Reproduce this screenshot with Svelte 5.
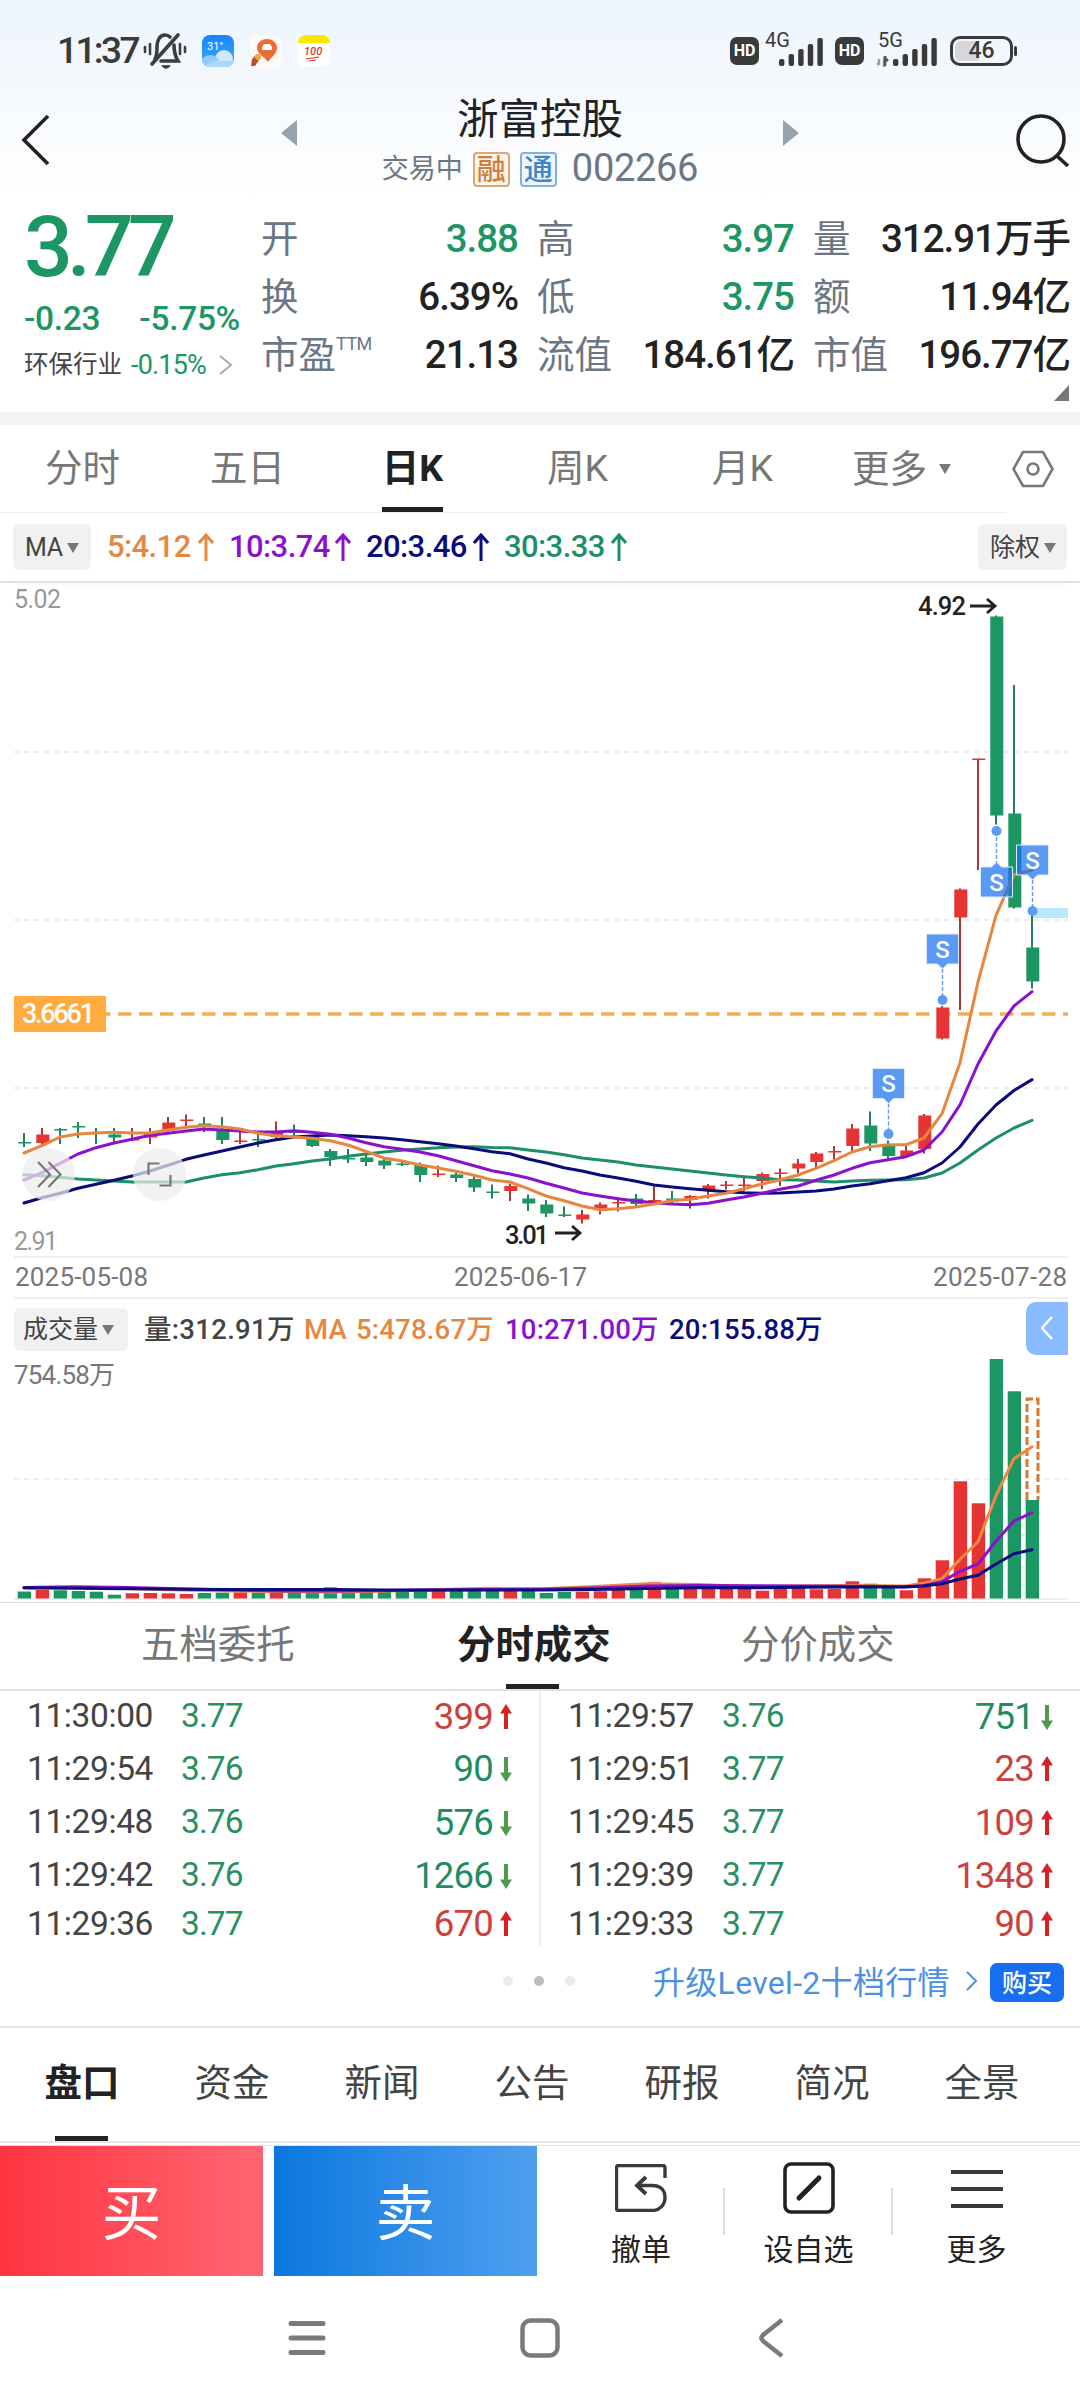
<script lang="ts">
  const up = '#e63333';
  const down = '#1c9663';

  const quotes = [
    { label: '开', value: '3.88', green: true },
    { label: '高', value: '3.97', green: true },
    { label: '量', value: '312.91万手' },
    { label: '换', value: '6.39%' },
    { label: '低', value: '3.75', green: true },
    { label: '额', value: '11.94亿' },
    { label: '市盈', sup: 'TTM', value: '21.13' },
    { label: '流值', value: '184.61亿' },
    { label: '市值', value: '196.77亿' }
  ];

  const periods = ['分时', '五日', '日K', '周K', '月K'];

  const averages = [
    { text: '5:4.12', color: '#e5873f', width: 122 },
    { text: '10:3.74', color: '#8a12cf', width: 137 },
    { text: '20:3.46', color: '#0b0b7c', width: 138 },
    { text: '30:3.33', color: '#1c8f6a', width: 138 }
  ];

  // [high, body top, body bottom, low, rising]
  const candles: [number, number, number, number, number][] = [
    [1133, 1142, 1143.5, 1147, 0],
    [1128, 1134.5, 1143, 1147, 1],
    [1128, 1129, 1130.5, 1144, 0],
    [1122, 1126, 1127.5, 1138, 0],
    [1128, 1132.5, 1134, 1144, 0],
    [1128, 1134.5, 1137.5, 1142, 0],
    [1128, 1139, 1140.5, 1141, 1],
    [1128, 1134, 1137.5, 1144, 1],
    [1117, 1122.5, 1130.5, 1132, 1],
    [1114.5, 1119.5, 1121, 1126, 1],
    [1117, 1123.5, 1126, 1132, 0],
    [1117, 1130.5, 1140, 1144, 0],
    [1128, 1140.5, 1142, 1144, 1],
    [1131, 1139, 1140.5, 1147, 0],
    [1121.5, 1132, 1137, 1139, 1],
    [1124.5, 1132, 1133, 1137, 0],
    [1135, 1137, 1146, 1147, 0],
    [1149, 1151, 1157, 1166, 0],
    [1149, 1158, 1159.5, 1163, 0],
    [1155, 1157.5, 1162, 1166, 0],
    [1159, 1160.5, 1165.5, 1169, 0],
    [1160, 1163.5, 1165, 1166, 0],
    [1162.5, 1165, 1175, 1182, 0],
    [1165.5, 1173.5, 1175, 1177, 1],
    [1172.5, 1174.5, 1178, 1182, 0],
    [1176.5, 1179, 1187.5, 1192, 0],
    [1184.5, 1191.5, 1193, 1198.5, 0],
    [1184, 1186, 1191, 1201, 1],
    [1194.5, 1198.5, 1203.5, 1211, 0],
    [1200, 1204.5, 1213.5, 1217, 0],
    [1206.5, 1214.5, 1216, 1217, 0],
    [1210, 1214.5, 1219.5, 1223.5, 1],
    [1202.5, 1204.5, 1209.5, 1214.5, 1],
    [1198, 1202, 1203.5, 1211.5, 1],
    [1194, 1198.5, 1204, 1208, 0],
    [1186, 1200, 1201.5, 1204.5, 1],
    [1191, 1198.5, 1200, 1203.5, 0],
    [1195, 1196, 1200, 1208.5, 1],
    [1184, 1185.5, 1191, 1198.5, 1],
    [1181, 1184.5, 1186, 1189.5, 1],
    [1176.5, 1184.5, 1186, 1191.5, 1],
    [1172.5, 1174, 1181, 1189, 1],
    [1168.5, 1172.5, 1174, 1186, 1],
    [1159, 1163.5, 1168.5, 1173.5, 1],
    [1152, 1153.5, 1162, 1168.5, 1],
    [1146, 1151, 1152.5, 1159, 1],
    [1124, 1128.5, 1146, 1151.5, 1],
    [1111.5, 1125.5, 1143.5, 1151, 0],
    [1140.5, 1146, 1156, 1158.5, 0],
    [1146, 1150.5, 1156, 1157.5, 1],
    [1114, 1115.5, 1149, 1153.5, 1],
    [1006, 1007.5, 1038.5, 1039.5, 1],
    [888.5, 889.5, 917.5, 1010, 1],
    [758.5, 758.5, 760, 870, 1],
    [615.5, 616.5, 815.5, 824.5, 0],
    [685, 813.5, 907.5, 908.5, 0],
    [914.5, 947.5, 981.5, 988.5, 0]
  ];

  const priceLines = [
    {
      color: '#1c8f6a',
      ys: [
        1174.7, 1175.7, 1177.3, 1179, 1180, 1181, 1182, 1182, 1182, 1182, 1178, 1174.7, 1172.7, 1169.7, 1166,
        1163.7, 1161, 1159, 1156.3, 1154, 1152, 1150.3, 1149, 1147.7, 1147, 1146.7, 1147.5, 1147.7, 1150,
        1152, 1154.7, 1158, 1160, 1162, 1165, 1167, 1169, 1171, 1173, 1175, 1176.7, 1178, 1179.7, 1179.9,
        1181, 1182, 1181, 1180.3, 1180, 1179.7, 1178, 1173, 1163, 1150, 1138, 1128, 1120.4
      ]
    },
    {
      color: '#0b0b7c',
      ys: [
        1203, 1197.7, 1193.3, 1188.3, 1184.3, 1180.3, 1176, 1171, 1165.3, 1159.3, 1155, 1151, 1147, 1143,
        1139.7, 1137, 1136, 1135, 1135.7, 1136.7, 1138, 1139.7, 1141.7, 1143.7, 1146, 1148.7, 1151.7,
        1153.7, 1159, 1163, 1167.7, 1171, 1175, 1178, 1181.3, 1185, 1187, 1188.7, 1190.3, 1191.7, 1192.7,
        1193.3, 1193, 1192, 1191, 1189, 1186, 1183.7, 1180.7, 1177.7, 1172.7, 1163, 1147, 1124, 1105,
        1090.5, 1079.6
      ]
    },
    {
      color: '#8a12cf',
      ys: [
        1180, 1172.7, 1163.3, 1154, 1147.7, 1143, 1139.3, 1135.3, 1133.3, 1131, 1129, 1130, 1131, 1132, 1132,
        1130.7, 1132.3, 1134.3, 1138, 1142.7, 1146.7, 1149.3, 1152, 1155.7, 1160.7, 1165.7, 1170.7, 1174,
        1178, 1183.3, 1188, 1193, 1196, 1198.7, 1201, 1202.7, 1204, 1204.7, 1203.3, 1200, 1197, 1193.3,
        1189.3, 1186, 1180.3, 1175, 1168.3, 1162.7, 1159.7, 1156.7, 1150, 1132, 1104.8, 1064, 1031, 1006,
        991.6
      ]
    },
    {
      color: '#e5873f',
      ys: [
        1153, 1145.7, 1137, 1134, 1133, 1132.3, 1133, 1133, 1130, 1127.3, 1125.7, 1126.7, 1129, 1133.3,
        1135.7, 1137, 1138.3, 1140.7, 1145, 1151.3, 1158, 1161, 1165, 1168, 1171.3, 1175.3, 1180, 1182,
        1188.7, 1196, 1200.7, 1206, 1209.7, 1208.7, 1207, 1204, 1200.7, 1199.3, 1196, 1193.3, 1188.7, 1184,
        1179.7, 1175, 1168.3, 1160.7, 1152, 1146.7, 1144.7, 1144.7, 1138, 1113.7, 1062.7, 982, 915.4,
        874.6, 870.4
      ]
    }
  ];

  const flags = [
    { x: 888.5, box: 1068.5, dot: 1134, below: false },
    { x: 942.5, box: 934, dot: 1000, below: false },
    { x: 996.5, box: 867, dot: 831, below: true },
    { x: 1032.5, box: 845, dot: 911, below: false }
  ];

  // tops of the volume bars
  const volumes = [
    1591.5, 1590, 1590.3, 1591, 1591.7, 1594.7, 1593.3, 1593, 1593.3, 1594, 1593, 1592.7, 1592.3, 1592.7, 1592,
    1592.7, 1590.7, 1587.3, 1591.3, 1592, 1591.7, 1591, 1591, 1591, 1590.5, 1590, 1589, 1590, 1591, 1593, 1592,
    1591.7, 1591.3, 1586.3, 1583.3, 1582.3, 1589, 1585, 1586, 1585.3, 1585.7, 1590.7, 1589, 1587.7, 1589.3,
    1589, 1581.3, 1583.7, 1585, 1590.3, 1578.3, 1560.3, 1481.3, 1503.3, 1359, 1391.3, 1500
  ];

  const volumeLines = [
    { color: '#f08a42', start: [1588.3, 1587.5, 1588.5, 1590, 1591, 1591.5, 1592, 1591, 1589.5, 1588.3, 1588.8, 1586.5, 1583.8, 1584.5, 1586.5, 1586, 1585.5, 1586], tail: [1583.3, 1578.7, 1559.3, 1541.7, 1495.7, 1458.7, 1446.7] },
    { color: '#8a12cf', start: [1587.5, 1586.8, 1587.5, 1588.8, 1590, 1591, 1591, 1590.5, 1590, 1589.5, 1589.3, 1588, 1586, 1585.5, 1585.8, 1586, 1586.3, 1586.8], tail: [1585.5, 1581.7, 1571.3, 1564, 1541.3, 1521, 1512.7] },
    { color: '#0b0b7c', start: [1587.8, 1588.2, 1588.7, 1589.3, 1589.5, 1589.5, 1589.5, 1590, 1590, 1590, 1590, 1589.5, 1588.5, 1587.8, 1587.8, 1587.3, 1587, 1587], tail: [1586, 1583.7, 1579, 1575.3, 1564, 1553.7, 1549.7] }
  ];

  const trades = [
    [['11:30:00', '3.77', '399', 'up'], ['11:29:57', '3.76', '751', 'down']],
    [['11:29:54', '3.76', '90', 'down'], ['11:29:51', '3.77', '23', 'up']],
    [['11:29:48', '3.76', '576', 'down'], ['11:29:45', '3.77', '109', 'up']],
    [['11:29:42', '3.76', '1266', 'down'], ['11:29:39', '3.77', '1348', 'up']],
    [['11:29:36', '3.77', '670', 'up'], ['11:29:33', '3.77', '90', 'up']]
  ];

  const sections = ['盘口', '资金', '新闻', '公告', '研报', '简况', '全景'];

  const cx = (i: number) => 24 + i * 18;
  const points = (ys: number[]) => ys.map((y, i) => `${cx(i)},${y}`).join(' ');

  // the quiet weeks are sampled about every three bars, the last seven days one by one
  function volumePoints(line: { start: number[]; tail: number[] }) {
    const a = line.start.map((y, i) => `${cx(i * 2.88)},${y}`);
    const b = line.tail.map((y, i) => `${cx(50 + i)},${y}`);
    return [...a, ...b].join(' ');
  }
</script>

{#snippet caret()}
  <svg class="caret" viewBox="0 0 12 10" width="12" height="10"><path d="M0 0h12L6 10z" fill="currentColor" /></svg>
{/snippet}

{#snippet signal(full: boolean)}
  <svg class="signal" viewBox="0 0 60 32" width="60" height="32">
    {#if full}
      <path d="M2 24v6m0 0l-2-2M7 24v8" stroke="#999" stroke-width="2.4" />
      <path d="M8 21v10M7 22l4 4" stroke="#555" stroke-width="2.6" />
    {/if}
    {#each [7, 12, 17, 22, 28] as h, i}
      <rect x={16 + i * 9.6} y={31 - h} width="5.4" height={h} rx="2" fill="#3a3a3a" />
    {/each}
  </svg>
{/snippet}

<div class="screen">
  <div class="status">
    <span class="clock">11:37</span>
    <svg class="mute" viewBox="0 0 44 38" width="44" height="38" fill="none" stroke="#3d3d3d" stroke-width="3.6" stroke-linecap="round">
      <path d="M12 27c2-3 2-6 2-12C14 8 17 3 22 3c2 0 4 1 5 2M31 13c0 6 1 11 4 16H18" />
      <path d="M35 3L9 32" />
      <path d="M7 12v10M2 15v5M37 12v10M42 15v5" stroke-width="2.6" />
      <path d="M19 34c2 3 6 3 8 0z" fill="#3d3d3d" stroke-width="1" />
    </svg>
    <svg class="app" viewBox="0 0 32 32" width="32" height="32">
      <defs>
        <linearGradient id="sky" x1="0" y1="0" x2="0" y2="1"><stop offset="0" stop-color="#1684fb" /><stop offset="1" stop-color="#3eaaf8" /></linearGradient>
        <clipPath id="round"><rect width="32" height="32" rx="8" /></clipPath>
      </defs>
      <g clip-path="url(#round)">
        <rect width="32" height="32" fill="url(#sky)" />
        <circle cx="22" cy="24" r="9" fill="#cfe8fd" />
        <circle cx="8" cy="30" r="10" fill="#8ccbfb" />
        <path d="M0 32h32v-6H10z" fill="#a9d8fc" />
      </g>
      <text x="5" y="15" font-size="11" fill="#fff">31°</text>
    </svg>
    <svg class="app" viewBox="0 0 32 32" width="32" height="32">
      <rect width="32" height="32" rx="8" fill="#fdf9f7" />
      <path d="M17 4c6 0 10 4 10 9 0 6-6 9-9 14-3-5-11-8-11-14 0-5 4-9 10-9z" fill="#ee6b35" />
      <path d="M12 15v-3l2-3h6l2 3v3z" fill="#fff" />
      <path d="M1 31l1-7 4-4 3 5-4 6z" fill="#b5522c" />
      <circle cx="8" cy="22" r="3" fill="#f7a13b" />
    </svg>
    <svg class="app" viewBox="0 0 32 32" width="32" height="32">
      <rect width="32" height="32" rx="8" fill="#fff" />
      <path d="M0 8a8 8 0 0 1 8-8h16a8 8 0 0 1 8 8z" fill="#fbe800" />
      <text x="6" y="20" font-size="11" font-style="italic" font-weight="500" fill="#d83a2e">100</text>
      <path d="M8 24l13-2M11 26l7-1" stroke="#d83a2e" stroke-width="1.2" />
    </svg>
    <div class="radios">
      <span class="hd">HD</span>
      <span class="cell"><i>4G</i>{@render signal(false)}</span>
      <span class="hd">HD</span>
      <span class="cell"><i>5G</i>{@render signal(true)}</span>
      <span class="battery">46</span>
    </div>
  </div>

  <header class="title-bar">
    <svg class="back" viewBox="0 0 30 52" width="30" height="52" fill="none" stroke="#222" stroke-width="3.6"><path d="M27 2L3 26l24 24" /></svg>
    <svg class="prev" viewBox="0 0 16 26" width="16" height="26"><path d="M16 0v26L0 13z" fill="#98a2ae" /></svg>
    <div class="name">
      <h1>浙富控股</h1>
      <div class="sub">
        <span>交易中</span>
        <b class="tag rong">融</b>
        <b class="tag tong">通</b>
        <span class="code">002266</span>
      </div>
    </div>
    <svg class="next" viewBox="0 0 16 26" width="16" height="26"><path d="M0 0v26l16-13z" fill="#98a2ae" /></svg>
    <svg class="search" viewBox="0 0 56 54" width="56" height="54" fill="none" stroke="#222" stroke-width="3.6"><circle cx="25" cy="25" r="23" /><path d="M41 42l11 10" /></svg>
  </header>

  <section class="summary">
    <div class="last">
      <div class="price">3.77</div>
      <div class="change"><span>-0.23</span><span>-5.75%</span></div>
      <div class="industry">
        <span>环保行业</span><em>-0.15%</em>
        <svg viewBox="0 0 14 20" width="14" height="20" fill="none" stroke="#a4abb3" stroke-width="2"><path d="M1 1l11 9-11 9" /></svg>
      </div>
    </div>
    <div class="quotes">
      {#each quotes as q}
        <div class="quote">
          <span class="label">{q.label}{#if q.sup}<sup>{q.sup}</sup>{/if}</span>
          <span class="value" class:green={q.green}>{q.value}</span>
        </div>
      {/each}
    </div>
    <i class="corner"></i>
  </section>

  <nav class="periods">
    {#each periods as p}
      <span class="period" class:active={p === '日K'}>{p}</span>
    {/each}
    <span class="period more">更多{@render caret()}</span>
    <svg class="gear" viewBox="0 0 42 38" width="42" height="38" fill="none" stroke="#777" stroke-width="2.6">
      <path d="M11 2h20l9.500 17L31 36H11L1.500 19z" /><circle cx="21" cy="19" r="5.500" />
    </svg>
  </nav>

  <div class="ma-bar">
    <span class="chip">MA{@render caret()}</span>
    <div class="ma-values">
      {#each averages as a}
        <span class="ma" style="color: {a.color}; width: {a.width}px">
          {a.text}
          <svg viewBox="0 0 16 28" width="16" height="28" fill="none" stroke="currentColor" stroke-width="3"><path d="M8 28V2M1 10l7-8 7 8" /></svg>
        </span>
      {/each}
    </div>
    <span class="chip right">除权{@render caret()}</span>
  </div>

  <svg class="chart" viewBox="0 583 1080 716" width="1080" height="716">
    <g stroke="#eceeee" stroke-width="2">
      <path d="M14 752H1068M14 920H1068M14 1088H1068" stroke-dasharray="5 5" />
      <path d="M14 1257H1068M14 1298H1068" stroke="#eef0f0" />
      <path d="M14 584H1068" stroke="#f3f3f3" stroke-width="1" />
    </g>
    <path d="M106 1014H1068" stroke="#f3ad52" stroke-width="3.600" stroke-dasharray="13.500 7.500" stroke-dashoffset="9" />

    {#each candles as [hi, top, bottom, lo, rising], i}
      <path d="M{cx(i)} {hi}V{lo}" stroke={rising ? '#a9393a' : '#22805a'} stroke-width="2" />
      <rect x={cx(i) - 5.7} y={top} width="13" height={bottom - top} fill={rising ? up : down} />
    {/each}
    <path d="M1033 913H1068" stroke="#b9e8fd" stroke-width="10" />
    {#each priceLines as line}
      <polyline points={points(line.ys)} fill="none" stroke={line.color} stroke-width="3" stroke-linejoin="round" stroke-linecap="round" />
    {/each}

    {#each flags as f}
      <path d={f.below ? `M${f.x} ${f.dot}V${f.box - 4}` : `M${f.x} ${f.box + 35}V${f.dot}`} stroke="#5b9bf4" stroke-width="1.4" stroke-dasharray="4 2" />
      <circle cx={f.x} cy={f.dot} r="5" fill="#5b9bf4" />
      <path
        d={f.below
          ? `M${f.x - 16} ${f.box}h11l5-5 5 5h11v30h-32z`
          : `M${f.x - 16} ${f.box}h32v30h-11l-5 5-5-5h-11z`}
        fill="#166fef"
        fill-opacity=".7"
        stroke="#dcecff"
        stroke-width="1"
      />
      <text class="flag" x={f.x} y={f.box + 23.5}>S</text>
    {/each}

    <rect x="14" y="996" width="92" height="36" fill="#ffab40" />
    <text x="22" y="1023" class="cost" textLength="73">3.6661</text>

    <text x="14" y="608" class="bound" textLength="47">5.02</text>
    <text x="14" y="1250" class="bound" textLength="44">2.91</text>
    <text x="918" y="615" class="extreme" textLength="48">4.92</text>
    <path class="pointer" d="M970 606h25M987 599l8 7-8 7" />
    <text x="505" y="1243.500" class="extreme" textLength="44">3.01</text>
    <path class="pointer" d="M555 1233h25M572 1226l8 7-8 7" />
    <text x="15" y="1286" class="date" textLength="133">2025-05-08</text>
    <text x="454" y="1286" class="date" textLength="133">2025-06-17</text>
    <text x="933" y="1286" class="date" textLength="134">2025-07-28</text>

    <g fill="none" stroke="#777" stroke-width="2.2">
      <circle cx="48.500" cy="1174.500" r="26.500" fill="#ededed" fill-opacity=".72" stroke="none" />
      <path d="M38 1162l12 12.500-12 12.500M48.500 1162l12 12.500-12 12.500" />
      <circle cx="159.500" cy="1174.500" r="26.500" fill="#ededed" fill-opacity=".72" stroke="none" />
      <path d="M148.500 1175v-11.500h11M170.500 1175v10.500h-11" />
    </g>
  </svg>

  <div class="volume-bar">
    <span class="chip">成交量{@render caret()}</span>
    <span class="vol-now">量:312.91万</span>
    <span class="orange ma-name">MA</span>
    <span class="orange vol-five">5:478.67万</span>
    <span class="purple vol-ten">10:271.00万</span>
    <span class="navy">20:155.88万</span>
    <span class="drawer">
      <svg viewBox="0 0 14 24" width="14" height="24" fill="none" stroke="#fff" stroke-width="2.4"><path d="M12 1L2 12l10 11" /></svg>
    </span>
  </div>

  <svg class="chart" viewBox="0 1356 1080 247" width="1080" height="247">
    <path d="M14 1479H1068" stroke="#eee" stroke-width="2" stroke-dasharray="5 5" />
    <path d="M14 1599H1068" stroke="#eee" stroke-width="2" />
    <text x="14" y="1384" class="vol-max" textLength="101">754.58万</text>
    {#each volumes as top, i}
      <rect x={cx(i) - 6.3} y={top} width="13.400" height={1598.5 - top} fill={candles[i][4] ? up : down} />
    {/each}
    <path d="M1027 1500v-101h11v101" fill="none" stroke="#d9782a" stroke-width="3" stroke-dasharray="8 3" />
    {#each volumeLines as line}
      <polyline points={volumePoints(line)} fill="none" stroke={line.color} stroke-width="3" stroke-linejoin="round" stroke-linecap="round" />
    {/each}
    <path d="M0 1602.500H1080" stroke="#ddd" stroke-width="1" />
  </svg>

  <nav class="deal-tabs">
    <span>五档委托</span>
    <span class="active">分时成交</span>
    <span>分价成交</span>
  </nav>

  <div class="trades">
    {#each trades as row}
      {#each row as [time, price, volume, dir]}
        <div class="trade">
          <span class="time">{time}</span>
          <span class="deal">{price}</span>
          <span class="volume {dir}">{volume}</span>
          <svg viewBox="0 0 12 26" width="12" height="26" class={dir}><path d="M4 25V9.500H0L6 0l6 9.500H8V25z" fill="currentColor" /></svg>
        </div>
      {/each}
    {/each}
  </div>

  <div class="promo">
    <div class="dots"><i></i><i class="on"></i><i></i></div>
    <span class="upgrade">升级Level-2十档行情</span>
    <svg viewBox="0 0 12 20" width="12" height="20" fill="none" stroke="#4b90e2" stroke-width="2"><path d="M1 1l9 9-9 9" /></svg>
    <span class="buy-badge">购买</span>
  </div>

  <nav class="sections">
    {#each sections as s, i}
      <span class:active={i === 0}>{s}</span>
    {/each}
  </nav>

  <footer class="actions">
    <button class="buy">买</button>
    <button class="sell">卖</button>
    <div class="action undo">
      <svg viewBox="0 0 52 48" width="52" height="48" fill="none" stroke="#3a3a3a" stroke-width="3.400">
        <path d="M50 14V3.500a2 2 0 0 0-2-2H3.500a2 2 0 0 0-2 2v41a2 2 0 0 0 2 2H37c8 0 13-6 13-13 0-8-5-12-13-12H23" />
        <path d="M31 13l-9 8.500 9 8.500" stroke-width="3.800" />
      </svg>
      <span>撤单</span>
    </div>
    <div class="action wide">
      <svg viewBox="0 0 52 52" width="52" height="52" fill="none" stroke="#222">
        <rect x="2" y="2" width="48" height="48" rx="6" stroke-width="3.600" /><path d="M16 36l20-20" stroke-width="5" stroke-linecap="round" />
      </svg>
      <span>设自选</span>
    </div>
    <div class="action">
      <svg viewBox="0 0 52 42" width="52" height="42" stroke="#3a3a3a" stroke-width="3.800"><path d="M0 4h52M0 21h52M0 38h52" /></svg>
      <span>更多</span>
    </div>
  </footer>

  <div class="system-nav">
    <svg viewBox="0 0 38 36" width="38" height="36" stroke="#7a7a7a" stroke-width="5" stroke-linecap="round"><path d="M3 3.500h32M3 18h32M3 32.500h32" /></svg>
    <svg viewBox="0 0 40 40" width="40" height="40" fill="none" stroke="#7a7a7a" stroke-width="4.500"><rect x="2.500" y="2.500" width="35" height="35" rx="8" /></svg>
    <svg viewBox="0 0 26 40" width="26" height="40" fill="none" stroke="#7a7a7a" stroke-width="4.500"><path d="M24 2L5 17q-3 3 0 6l19 15" /></svg>
  </div>
</div>

<style>
  :global(body) {
    background: #fff;
  }

  .screen {
    width: 1080px;
    height: 2400px;
    overflow: hidden;
    background: linear-gradient(#edf4fd 0, #fff 200px);
    font-family: Roboto, 'Noto Sans CJK SC', sans-serif;
    line-height: 1.2;
    color: #222;
  }

  .screen * {
    box-sizing: border-box;
  }

  .screen span {
    white-space: nowrap;
  }

  svg {
    display: block;
    flex: none;
  }

  .status {
    display: flex;
    align-items: center;
    height: 102px;
    padding: 0 67px 0 57px;
  }

  .clock {
    width: 86px;
    font-size: 37px;
    font-weight: 500;
    letter-spacing: -2.6px;
    color: #3a3a3a;
  }

  .mute {
    margin-right: 15px;
  }

  .app {
    margin-right: 16px;
  }

  .radios {
    display: flex;
    align-items: center;
    margin-left: auto;
  }

  .hd {
    display: grid;
    place-items: center;
    width: 29px;
    height: 28px;
    border-radius: 7px;
    background: #3a3a3a;
    color: #fff;
    font-size: 16px;
    font-weight: 700;
  }

  .cell {
    position: relative;
    display: flex;
    width: 76px;
    padding-left: 5px;
  }

  .cell .signal {
    margin-left: -1px;
  }

  .cell i {
    position: absolute;
    left: 6px;
    top: -5px;
    font-style: normal;
    font-size: 20px;
    line-height: 20px;
    color: #3a3a3a;
  }

  .cell + .hd + .cell {
    width: 86px;
    padding-left: 14px;
  }

  .cell + .hd + .cell i {
    left: 14px;
  }

  .battery {
    position: relative;
    display: grid;
    place-items: center;
    width: 63px;
    height: 30px;
    border: 3px solid #3a3a3a;
    border-radius: 10px;
    background: linear-gradient(90deg, #d5d7da 46%, transparent 46%);
    background-clip: content-box;
    padding: 2px;
    font-size: 23px;
    font-weight: 500;
    line-height: 20px;
    color: #3a3a3a;
  }

  .battery::after {
    content: '';
    position: absolute;
    right: -7px;
    top: 7px;
    width: 3px;
    height: 10px;
    border-radius: 2px;
    background: #3a3a3a;
  }

  .title-bar {
    display: flex;
    height: 98px;
    padding: 12px 8px 0 21px;
  }

  .prev,
  .next {
    margin-top: 6px;
  }

  .prev {
    margin-left: 230px;
  }

  .search {
    margin-left: auto;
  }

  .name {
    width: 486px;
    margin-top: -20px;
    text-align: center;
  }

  h1 {
    margin: 0;
    font-size: 41.5px;
    line-height: 52px;
    font-weight: 400;
  }

  .sub {
    display: flex;
    align-items: center;
    justify-content: center;
    height: 40px;
    margin-top: 3px;
    font-size: 27px;
    color: #6b7785;
  }

  .tag {
    display: grid;
    place-items: center;
    width: 37px;
    height: 35px;
    margin-left: 10px;
    border: 2px solid;
    border-radius: 4px;
    font-size: 29px;
    line-height: 32px;
    font-weight: 500;
  }

  .rong {
    color: #cf7f3b;
    border-color: #dda677;
    background: #fdf4ec;
  }

  .tong {
    color: #3c85c9;
    border-color: #82b1dc;
    background: #eef5fc;
  }

  .code {
    margin-left: 15px;
    font-size: 38px;
    letter-spacing: -0.3px;
  }

  .summary {
    display: flex;
    position: relative;
    height: 225px;
    border-bottom: 13px solid #f4f4f4;
  }

  .last {
    width: 261px;
    padding-left: 24px;
    color: #1c9663;
  }

  .price {
    margin-top: 9px;
    font-size: 86px;
    line-height: 76px;
    font-weight: 500;
    letter-spacing: -6px;
  }

  .change {
    display: flex;
    gap: 39px;
    margin-top: 14px;
    font-size: 33.5px;
    font-weight: 500;
    line-height: 40px;
    letter-spacing: -0.3px;
  }

  .industry {
    display: flex;
    align-items: center;
    margin-top: 8px;
    height: 36px;
    font-size: 24.5px;
    color: #444;
  }

  .industry em {
    margin: 0 13px 0 9px;
    font-style: normal;
    font-size: 27px;
    letter-spacing: -0.8px;
    color: #1c9663;
  }

  .quotes {
    display: grid;
    grid-template-columns: repeat(3, 257px);
    grid-auto-rows: 58px;
    column-gap: 19px;
    height: 174px;
    margin-top: 10px;
  }

  .quote {
    display: flex;
    align-items: center;
    justify-content: space-between;
  }

  .label {
    font-size: 37.5px;
    color: #6b7785;
  }

  .label sup {
    position: relative;
    top: -4px;
    font-size: 18px;
    vertical-align: super;
    line-height: 0;
    letter-spacing: -0.5px;
  }

  .value {
    font-size: 38.5px;
    font-weight: 500;
    letter-spacing: -1px;
  }

  .green {
    color: #1c9663;
  }

  .corner {
    position: absolute;
    right: 11px;
    bottom: 11px;
    border: solid transparent;
    border-width: 16px 0 0 15px;
    border-top: 0;
    border-bottom: 16px solid #777;
  }

  .periods {
    display: flex;
    height: 88px;
    font-size: 37.5px;
    line-height: 86px;
    color: #777;
    background: linear-gradient(#eee, #eee) 0 100% / 1006px 1px no-repeat;
  }

  .period {
    position: relative;
    width: 165px;
    text-align: center;
  }

  .period.active {
    font-weight: 700;
    color: #222;
  }

  .period.active::after {
    content: '';
    position: absolute;
    left: 52px;
    bottom: 1px;
    width: 61px;
    height: 5px;
    background: #222;
  }

  .period.more {
    display: flex;
    align-items: center;
    width: 187px;
    padding-left: 27px;
  }

  .caret {
    display: inline-block;
    margin-left: 4px;
    color: #777;
  }

  .more .caret {
    margin-left: 12px;
  }

  .gear {
    margin-top: 25px;
  }

  .ma-bar {
    display: flex;
    align-items: center;
    height: 70px;
    padding: 0 13px;
    border-bottom: 2px solid #e2e2e2;
  }

  .chip {
    display: flex;
    align-items: center;
    height: 46px;
    padding: 2px 11px 0 12px;
    border-radius: 6px;
    background: #f1f1f1;
    font-size: 25px;
    color: #444;
  }

  .ma-bar .chip:first-child {
    width: 78px;
    letter-spacing: -0.3px;
  }

  .chip.right {
    margin-left: auto;
  }

  .ma-values {
    display: flex;
    margin-left: 16px;
  }

  .ma {
    display: flex;
    align-items: center;
    justify-content: space-between;
    padding-right: 15px;
    font-size: 31px;
    font-weight: 500;
    letter-spacing: -0.6px;
  }

  .flag {
    font: 500 24px Roboto, sans-serif;
    fill: #fff;
    text-anchor: middle;
  }

  .cost {
    font-size: 27px;
    font-weight: 500;
    fill: #fff;
  }

  .bound {
    font-size: 25px;
    fill: #999;
  }

  .extreme {
    font-size: 25.5px;
    font-weight: 500;
    fill: #222;
  }

  .pointer {
    fill: none;
    stroke: #222;
    stroke-width: 2.8;
  }

  .date {
    font-size: 26px;
    fill: #777;
  }

  .vol-max {
    font-size: 26px;
    fill: #777;
  }

  .volume-bar {
    display: flex;
    align-items: center;
    height: 57px;
    padding: 3px 12px 0 14px;
    font-size: 27.5px;
    letter-spacing: 0.2px;
    font-weight: 500;
    color: #444;
  }

  .volume-bar .chip {
    width: 114px;
    height: 43px;
    padding: 2px 9px 0;
    font-weight: 400;
    letter-spacing: 0;
  }

  .vol-now {
    width: 160px;
    margin-left: 16px;
    letter-spacing: 0.3px;
  }

  .ma-name {
    width: 52px;
  }

  .vol-five {
    width: 149px;
  }

  .vol-ten {
    width: 164px;
  }

  .orange {
    color: #e5873f;
  }

  .purple {
    color: #8a12cf;
  }

  .navy {
    color: #0b0b7c;
  }

  .drawer {
    display: grid;
    place-items: center;
    width: 42px;
    height: 53px;
    margin: -2px 0 0 auto;
    border-radius: 10px 0 0 10px;
    background: #8abaff;
  }

  .deal-tabs {
    display: flex;
    gap: 140px;
    height: 88px;
    padding: 0 0 0 141px;
    border-bottom: 2px solid #e2e2e2;
    font-size: 38.4px;
    line-height: 84px;
    color: #777;
  }

  .deal-tabs span {
    width: 152px;
    height: 86px;
    text-align: center;
  }

  .deal-tabs span:nth-child(2) {
    margin-left: 24px;
  }

  .deal-tabs span:nth-child(3) {
    margin-left: -8px;
  }

  .deal-tabs .active {
    position: relative;
    font-weight: 700;
    color: #222;
  }

  .deal-tabs .active::after {
    content: '';
    position: absolute;
    left: 49px;
    bottom: 0;
    width: 53px;
    height: 5px;
    background: #222;
  }

  .trades {
    display: grid;
    grid-template-columns: 541px 539px;
    grid-template-rows: 51px 54px 53px 53px 44px;
    height: 255px;
    background: linear-gradient(#eee, #eee) 539px 0 / 2px 100% no-repeat;
  }

  .trade {
    display: flex;
    align-items: center;
    padding: 0 27px 0 27px;
    font-size: 33.5px;
    color: #444;
  }

  .trade:nth-child(odd) {
    padding-right: 29px;
  }

  .time {
    width: 154px;
    letter-spacing: -0.4px;
  }

  .trade .deal {
    letter-spacing: -0.9px;
    color: #2a8f63;
  }

  .volume {
    flex: 1;
    margin-right: 7px;
    text-align: right;
    font-size: 36.5px;
    letter-spacing: -0.8px;
  }

  .volume.up {
    color: #cc403e;
  }

  .volume.down {
    color: #1f8c62;
  }

  svg.up {
    color: #d8221f;
  }

  svg.down {
    color: #4c9a4c;
    transform: scaleY(-1);
  }

  .promo {
    display: flex;
    align-items: center;
    height: 82px;
    padding: 0 16px 10px 503px;
    border-bottom: 2px solid #e2e2e2;
  }

  .dots {
    display: flex;
    gap: 21px;
    width: 150px;
  }

  .dots i {
    width: 10px;
    height: 10px;
    border-radius: 50%;
    background: #ebebeb;
  }

  .dots .on {
    background: #bdbdbd;
  }

  .upgrade {
    width: 313px;
    padding-top: 4px;
    font-size: 32px;
    letter-spacing: 0.3px;
    color: #4b90e2;
  }

  .buy-badge {
    display: grid;
    place-items: center;
    width: 74px;
    height: 39px;
    margin: 2px 0 0 12px;
    padding-top: 3px;
    border-radius: 7px;
    background: #166ff0;
    color: #fff;
    font-size: 25px;
    font-weight: 500;
  }

  .sections {
    display: flex;
    height: 115px;
    padding-left: 7px;
    border-bottom: 2px solid #e6e6e6;
    font-size: 37.5px;
    line-height: 110px;
    color: #444;
  }

  .sections span {
    width: 150px;
    height: 113px;
    text-align: center;
  }

  .sections .active {
    position: relative;
    font-weight: 700;
    color: #222;
  }

  .sections .active::after {
    content: '';
    position: absolute;
    left: 48px;
    bottom: 0;
    width: 53px;
    height: 5px;
    background: #222;
  }

  .actions {
    display: flex;
    height: 131px;
    margin-top: 2px;
    border-top: 1px solid #e0e0e0;
  }

  .actions button {
    width: 263px;
    padding: 0 0 6px;
    border: 0;
    color: #fff;
    font: 400 60px 'Noto Sans CJK SC', sans-serif;
  }

  .buy {
    background: linear-gradient(90deg, #ff3441, #ff6672);
  }

  .sell {
    margin: 0 18px 0 11px;
    background: linear-gradient(90deg, #0b78df, #4f9fee);
  }

  .action {
    position: relative;
    display: flex;
    flex-direction: column;
    align-items: center;
    justify-content: flex-end;
    gap: 14px;
    width: 168px;
    padding: 0 0 4px 3px;
    font-size: 30px;
    line-height: 44px;
  }

  .action:nth-child(n + 4)::before {
    content: '';
    position: absolute;
    left: 0;
    top: 42px;
    width: 2px;
    height: 47px;
    background: #ddd;
  }

  .action svg {
    margin-bottom: 2px;
  }

  .action.undo {
    padding-left: 4px;
  }

  .action.wide svg {
    margin-bottom: 0;
  }

  .action:last-child svg {
    margin-bottom: 4px;
  }

  .system-nav {
    display: flex;
    align-items: center;
    gap: 194px;
    height: 124px;
    padding-left: 288px;
  }

  .system-nav svg:last-child {
    margin-left: 4px;
  }
</style>
